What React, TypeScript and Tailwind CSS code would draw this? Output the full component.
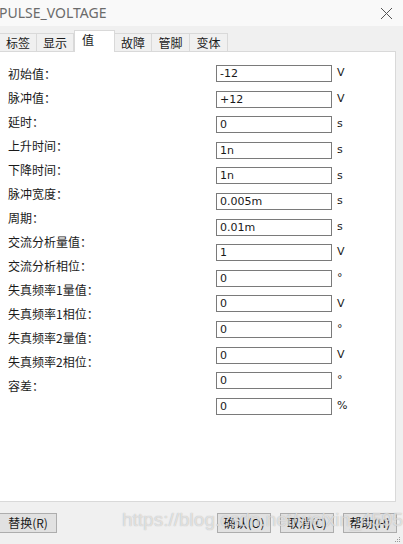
import React from "react";

const labels = [
  "初始值：",
  "脉冲值：",
  "延时：",
  "上升时间：",
  "下降时间：",
  "脉冲宽度：",
  "周期：",
  "交流分析量值：",
  "交流分析相位：",
  "失真频率1量值：",
  "失真频率1相位：",
  "失真频率2量值：",
  "失真频率2相位：",
  "容差：",
];

const fields: [string, string][] = [
  ["-12", "V"],
  ["+12", "V"],
  ["0", "s"],
  ["1n", "s"],
  ["1n", "s"],
  ["0.005m", "s"],
  ["0.01m", "s"],
  ["1", "V"],
  ["0", "°"],
  ["0", "V"],
  ["0", "°"],
  ["0", "V"],
  ["0", "°"],
  ["0", "%"],
];

const tabs = ["标签", "显示", "值", "故障", "管脚", "变体"];
const tabWidths = [37, 37, 41, 37, 38, 38];

const cjk = "font-['Microsoft_YaHei','Noto_Sans_CJK_SC',sans-serif]";

export default function App() {
  return (
    <div className={`relative w-[403px] h-[544px] overflow-hidden bg-[#f0f0f0] text-[#1a1a1a] ${cjk}`}>
      {/* title bar */}
      <div className="h-[26px] bg-[#f9f9f9] flex items-center justify-between">
        <span className="text-[14px] leading-none text-[#6b6b6b] font-['Noto_Sans','Liberation_Sans',sans-serif] -ml-[1px]">
          PULSE_VOLTAGE
        </span>
        <svg width="13" height="13" viewBox="0 0 13 13" className="mr-[10px]">
          <path d="M1 1 L12 12 M12 1 L1 12" stroke="#555" strokeWidth="1" />
        </svg>
      </div>

      {/* tabs */}
      <div className="h-[25px] flex items-end pt-[4px]">
        {tabs.map((t, i) => {
          const active = i === 2;
          return (
            <div
              key={t}
              style={{ width: tabWidths[i] }}
              className={
                active
                  ? "h-[22px] bg-white border-t border-l border-r border-[#d9d9d9] -mb-[1px] relative z-10 text-[12px] pl-[7px] leading-[18px]"
                  : "h-[18px] bg-[#f0f0f0] border-t border-r border-[#d9d9d9] text-[12px] flex items-center justify-center leading-none"
              }
            >
              {t}
            </div>
          );
        })}
      </div>

      {/* panel */}
      <div className="h-[451px] w-[397px] -ml-[1px] bg-white border border-[#d9d9d9] flex">
        <div className="w-[216px] flex flex-col pt-[10px] pl-[8px]">
          {labels.map((l) => (
            <div key={l} className="h-[24px] text-[12px] leading-[24px] whitespace-nowrap">
              {l}
            </div>
          ))}
        </div>
        <div className="flex flex-col pt-[13px] gap-[8.6px]">
          {fields.map(([v, u], i) => (
            <div key={i} className="flex items-center">
              <div className="w-[116px] h-[17px] border border-[#7a7a7a] bg-white text-[11px] leading-[15px] pl-[3px] font-['Tahoma','DejaVu_Sans',sans-serif]">
                {v}
              </div>
              <span className="ml-[5px] text-[11px] font-['Tahoma','DejaVu_Sans',sans-serif]">{u}</span>
            </div>
          ))}
        </div>
      </div>

      {/* buttons */}
      <div className="flex items-center mt-[11px] h-[20px]">
        <button className="w-[58px] h-[20px] -ml-[1px] bg-[#e1e1e1] border border-[#adadad] text-[12px] leading-none">
          替换(R)
        </button>
        <div className="flex-1" />
        <button className="w-[54px] h-[20px] bg-[#e1e1e1] border border-[#adadad] text-[12px] leading-none">
          确认(O)
        </button>
        <button className="w-[54px] h-[20px] ml-[9px] bg-[#e1e1e1] border border-[#adadad] text-[12px] leading-none">
          取消(C)
        </button>
        <button className="w-[54px] h-[20px] ml-[9px] mr-[6px] bg-[#e1e1e1] border border-[#adadad] text-[12px] leading-none">
          帮助(H)
        </button>
      </div>

      {/* watermark */}
      <div className="absolute left-[122px] top-[510px] text-[19px] leading-none text-white/60 font-['Liberation_Sans',sans-serif] whitespace-nowrap [text-shadow:0_0_1px_rgba(120,120,120,0.6)] pointer-events-none">
        https://blog.csdn.net/weixin_45955014
      </div>

      {/* grip */}
      <svg width="6" height="6" viewBox="0 0 6 6" className="absolute right-[2px] bottom-[1px]">
        <rect x="4" y="0" width="1" height="1" fill="#999" />
        <rect x="2" y="2" width="1" height="1" fill="#999" />
        <rect x="4" y="2" width="1" height="1" fill="#999" />
        <rect x="0" y="4" width="1" height="1" fill="#999" />
        <rect x="2" y="4" width="1" height="1" fill="#999" />
        <rect x="4" y="4" width="1" height="1" fill="#999" />
      </svg>
    </div>
  );
}
